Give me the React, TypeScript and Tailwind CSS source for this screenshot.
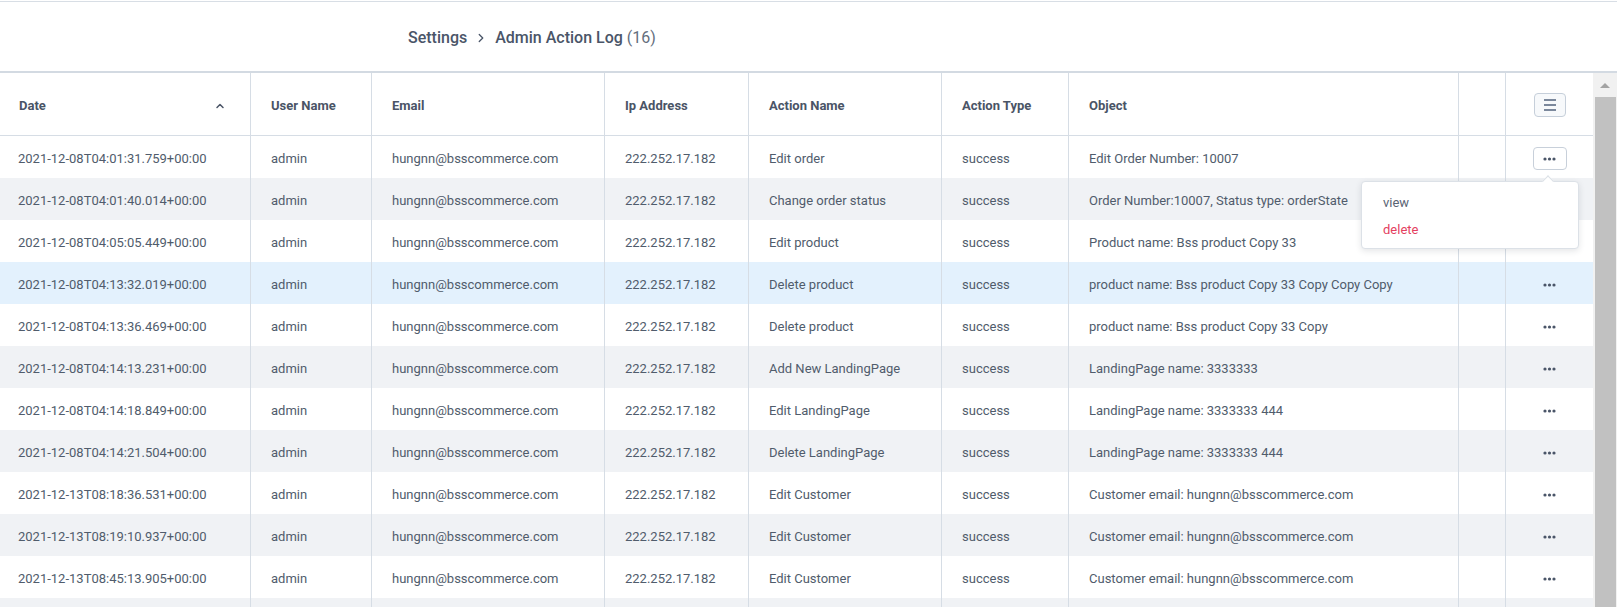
import { ChevronRight, ChevronUp } from 'lucide-react';

type LogRow = {
  date: string;
  action: string;
  object: string;
};

const rows: LogRow[] = [
  { date: '2021-12-08T04:01:31.759+00:00', action: 'Edit order', object: 'Edit Order Number: 10007' },
  { date: '2021-12-08T04:01:40.014+00:00', action: 'Change order status', object: 'Order Number:10007, Status type: orderState' },
  { date: '2021-12-08T04:05:05.449+00:00', action: 'Edit product', object: 'Product name: Bss product Copy 33' },
  { date: '2021-12-08T04:13:32.019+00:00', action: 'Delete product', object: 'product name: Bss product Copy 33 Copy Copy Copy' },
  { date: '2021-12-08T04:13:36.469+00:00', action: 'Delete product', object: 'product name: Bss product Copy 33 Copy' },
  { date: '2021-12-08T04:14:13.231+00:00', action: 'Add New LandingPage', object: 'LandingPage name: 3333333' },
  { date: '2021-12-08T04:14:18.849+00:00', action: 'Edit LandingPage', object: 'LandingPage name: 3333333 444' },
  { date: '2021-12-08T04:14:21.504+00:00', action: 'Delete LandingPage', object: 'LandingPage name: 3333333 444' },
  { date: '2021-12-13T08:18:36.531+00:00', action: 'Edit Customer', object: 'Customer email: hungnn@bsscommerce.com' },
  { date: '2021-12-13T08:19:10.937+00:00', action: 'Edit Customer', object: 'Customer email: hungnn@bsscommerce.com' },
  { date: '2021-12-13T08:45:13.905+00:00', action: 'Edit Customer', object: 'Customer email: hungnn@bsscommerce.com' },
];

const cols = 'grid grid-cols-[251px_121px_233px_144px_193px_127px_390px_47px_87px]';
const cell = 'flex items-center border-r border-[#d6dde5] px-5 pt-[3px] whitespace-nowrap';

const Dots = () => (
  <svg width="13" height="4" viewBox="0 0 13 4" className="block">
    <circle cx="2" cy="2" r="1.6" fill="#4a5568" />
    <circle cx="6.5" cy="2" r="1.6" fill="#4a5568" />
    <circle cx="11" cy="2" r="1.6" fill="#4a5568" />
  </svg>
);

const ActionMenu = () => (
  <div className="absolute left-[1361px] top-[181px] w-[218px] h-[68px] rounded border border-[#dce1e7] bg-white shadow-[0_2px_6px_rgba(30,40,60,0.12)]">
    <div className="absolute left-[182px] top-[-5px] w-2 h-2 rotate-45 bg-white border-l border-t border-[#dce1e7]" />
    <div className="pl-[21px] pt-[12px] text-[13px] leading-[18px]">
      <div className="text-[#5a6474]">view</div>
      <div className="mt-[9px] text-[#e4405f]">delete</div>
    </div>
  </div>
);

export default function App() {
  return (
    <div className="relative h-[607px] overflow-hidden bg-white pt-px font-['Roboto',sans-serif] text-[#505c6c]">
      <div className="flex h-[70px] items-center border-t border-[#d8dee5] pl-[408px] pt-[2px] text-[16px] text-[#4a5568]">
        <span className="font-medium">Settings</span>
        <ChevronRight className="mx-[7px] h-[14px] w-[14px]" strokeWidth={2.25} />
        <span className="font-medium">Admin Action Log</span>
        <span className="ml-1 text-[#646e7d]">(16)</span>
      </div>

      <div className="flex border-t-2 border-[#d3dae2]">
        <div className="w-[1593px]">
          <div className={`${cols} h-[63px] border-b border-[#d6dde5] text-[13px] font-bold text-[#4a5466]`}>
            <div className={`${cell} justify-between !pl-[19px] !pr-[24px]`}>
              <span>Date</span>
              <ChevronUp className="h-3 w-3" strokeWidth={3} />
            </div>
            <div className={cell}>User Name</div>
            <div className={cell}>Email</div>
            <div className={cell}>Ip Address</div>
            <div className={cell}>Action Name</div>
            <div className={cell}>Action Type</div>
            <div className={cell}>Object</div>
            <div className={cell} />
            <div className="flex items-center justify-center pt-[2px]">
              <div className="flex h-6 w-8 flex-col items-center justify-center gap-[3px] rounded border border-[#c6cfda] bg-[#f7f9fb]">
                <span className="block h-[2px] w-3 bg-[#7b889c]" />
                <span className="block h-[2px] w-3 bg-[#7b889c]" />
                <span className="block h-[2px] w-3 bg-[#7b889c]" />
              </div>
            </div>
          </div>

          {rows.map((r, i) => (
            <div
              key={r.date}
              className={`${cols} h-[42px] text-[13px] ${
                i === 3 ? 'bg-[#e3f1fd]' : i % 2 === 1 ? 'bg-[#f0f2f5]' : 'bg-white'
              }`}
            >
              <div className={`${cell} !pl-[18px]`}>{r.date}</div>
              <div className={cell}>admin</div>
              <div className={cell}>hungnn@bsscommerce.com</div>
              <div className={cell}>222.252.17.182</div>
              <div className={cell}>{r.action}</div>
              <div className={cell}>success</div>
              <div className={cell}>{r.object}</div>
              <div className={cell} />
              <div className="flex items-center justify-center pt-[3px]">
                {i === 0 ? (
                  <div className="flex h-[23px] w-[34px] items-center justify-center rounded border border-[#c8d0da] bg-white">
                    <Dots />
                  </div>
                ) : (
                  <Dots />
                )}
              </div>
            </div>
          ))}

          {/* next row, cut by the bottom edge */}
          <div className={`${cols} h-[42px] bg-[#f0f2f5]`}>
            <div className={cell} />
            <div className={cell} />
            <div className={cell} />
            <div className={cell} />
            <div className={cell} />
            <div className={cell} />
            <div className={cell} />
            <div className={cell} />
            <div />
          </div>
        </div>

        {/* scrollbar */}
        <div className="flex w-6 flex-col bg-[#f1f1f1]">
          <div className="flex h-6 items-center justify-center">
            <div className="h-0 w-0 border-x-[5px] border-b-[5px] border-x-transparent border-b-[#a3a3a3]" />
          </div>
          <div className="ml-[2px] mr-px h-[600px] bg-[#c1c1c1]" />
        </div>
      </div>

      <ActionMenu />
    </div>
  );
}
